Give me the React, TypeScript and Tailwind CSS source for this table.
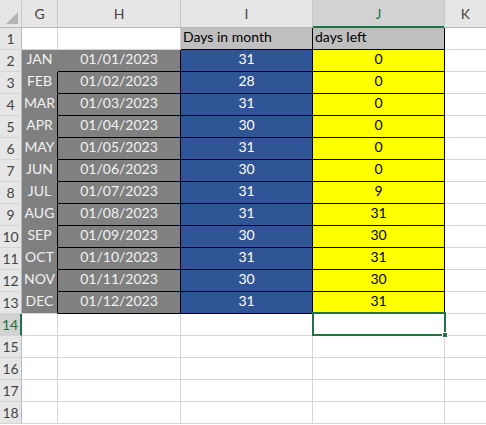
import React from "react";

const months = ["JAN","FEB","MAR","APR","MAY","JUN","JUL","AUG","SEP","OCT","NOV","DEC"];
const days = [31,28,31,30,31,30,31,31,30,31,30,31];
const left = [0,0,0,0,0,0,9,31,30,31,30,31];

function RowHeader({ n, active }: { n: number; active?: boolean }) {
  return (
    <div
      className={
        "w-[22px] shrink-0 h-full flex items-center justify-center text-[14px] border-b border-[#d4d4d4] " +
        (active
          ? "bg-[#d2d2d2] text-[#217346] border-r-2 border-r-[#217346]"
          : "bg-[#e6e6e6] text-[#444] border-r border-r-[#b8b8b8]")
      }
    >
      {n}
    </div>
  );
}

export default function App() {
  const font = { fontFamily: "Lato, 'Open Sans', sans-serif" };
  return (
    <div className="w-[486px] h-[425px] overflow-hidden bg-white relative" style={font}>
      {/* column headers */}
      <div className="flex h-[28px] bg-[#e6e6e6] border-b border-[#b8b8b8] text-[14px] text-[#444]">
        <div className="w-[22px] shrink-0 border-r border-[#c8c8c8] relative">
          <div className="absolute right-[3px] bottom-[3px] w-0 h-0 border-l-[12px] border-l-transparent border-b-[12px] border-b-[#b4b4b4]" />
        </div>
        <div className="w-[36px] shrink-0 border-r border-[#c8c8c8] flex items-center justify-center">G</div>
        <div className="w-[123px] shrink-0 border-r border-[#c8c8c8] flex items-center justify-center">H</div>
        <div className="w-[132px] shrink-0 border-r border-[#c8c8c8] flex items-center justify-center">I</div>
        <div className="w-[132px] shrink-0 border-r border-[#c8c8c8] flex items-center justify-center bg-[#d2d2d2] text-[#217346] relative">
          J
          <div className="absolute left-0 right-0 -bottom-[1px] h-[2px] bg-[#217346]" />
        </div>
        <div className="flex-1 flex items-center justify-center">K</div>
      </div>

      {/* row 1 */}
      <div className="flex h-[22px] text-[14px]">
        <RowHeader n={1} />
        <div className="w-[36px] shrink-0 border-r border-b border-[#d4d4d4]" />
        <div className="w-[123px] shrink-0 border-r border-b border-[#d4d4d4]" />
        <div className="w-[132px] shrink-0 border-r border-b border-black bg-[#bfbfbf] flex items-end pb-[2px] pl-[2px] text-black">Days in month</div>
        <div className="w-[132px] shrink-0 border-r border-b border-black bg-[#bfbfbf] flex items-end pb-[2px] pl-[2px] text-black">days left</div>
        <div className="flex-1 border-b border-[#d4d4d4]" />
      </div>

      {/* data rows */}
      {months.map((m, i) => (
        <div key={m} className="flex h-[22px] text-[14px]">
          <RowHeader n={i + 2} />
          <div
            className={
              "w-[36px] shrink-0 border-r bg-[#808080] text-[#f2f2f2] flex items-end justify-center pb-[2px] border-b " +
              (i === 0 ? "border-r-[#808080] " : "border-r-black ") +
              (i === 11 ? "border-b-[#d4d4d4]" : "border-b-[#808080]")
            }
          >
            {m}
          </div>
          <div className="w-[123px] shrink-0 border-r border-b border-black bg-[#808080] text-[#f2f2f2] flex items-end justify-center pb-[2px]">
            {`01/${String(i + 1).padStart(2, "0")}/2023`}
          </div>
          <div className="w-[132px] shrink-0 border-r border-b border-black bg-[#2f5597] text-white flex items-end justify-center pb-[2px]">
            {days[i]}
          </div>
          <div className="w-[132px] shrink-0 border-r border-b border-black bg-[#ffff00] text-black flex items-end justify-center pb-[2px]">
            {left[i]}
          </div>
          <div className="flex-1 border-b border-[#d4d4d4]" />
        </div>
      ))}

      {/* empty rows */}
      {[14, 15, 16, 17, 18].map((n) => (
        <div key={n} className="flex h-[22px] text-[14px]">
          <RowHeader n={n} active={n === 14} />
          <div className="w-[36px] shrink-0 border-r border-b border-[#d4d4d4]" />
          <div className="w-[123px] shrink-0 border-r border-b border-[#d4d4d4]" />
          <div className="w-[132px] shrink-0 border-r border-b border-[#d4d4d4]" />
          <div className="w-[132px] shrink-0 border-r border-b border-[#d4d4d4]" />
          <div className="flex-1 border-b border-[#d4d4d4]" />
        </div>
      ))}

      {/* selection box on J14 */}
      <div className="absolute left-[312px] top-[312px] w-[134px] h-[24px] border-2 border-[#217346]">
        <div className="absolute -right-[4px] -bottom-[4px] w-[6px] h-[6px] bg-[#217346] border border-white" />
      </div>
    </div>
  );
}
